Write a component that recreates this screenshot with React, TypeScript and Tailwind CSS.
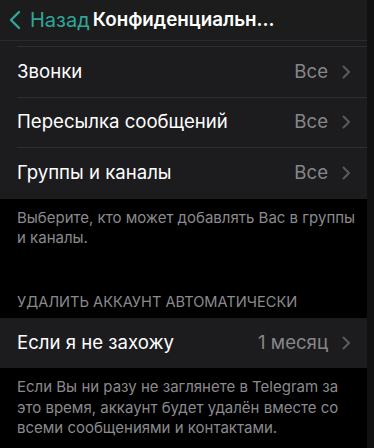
import React from "react"

const font = { fontFamily: "Inter, 'Noto Sans', sans-serif" }

function Chevron() {
  return (
    <svg width="9" height="14" viewBox="0 0 9 14" fill="none" className="ml-[14px] shrink-0">
      <path d="M1.5 1.5L7 7l-5.5 5.5" stroke="#5b5b5f" strokeWidth="2" strokeLinecap="round" strokeLinejoin="round" />
    </svg>
  )
}

function Row({ label, value, last }: { label: string; value: string; last?: boolean }) {
  return (
    <div className="pl-[17px]">
      <div className={"h-[50.5px] flex items-center pr-[16px] " + (last ? "" : "border-b border-[#2e2e30]")}>
        <span className="flex-1 text-[18.6px] text-white">{label}</span>
        <span className="text-[18.6px] text-[#86868a]">{value}</span>
        <Chevron />
      </div>
    </div>
  )
}

export default function App() {
  return (
    <div className="w-[374px] h-[448px] bg-black flex overflow-hidden" style={font}>
      <div className="flex-1 flex flex-col">
        {/* nav bar */}
        <div className="h-[41px] shrink-0 bg-[#1c1c1d] border-b border-[#2a2a2c] flex items-center pl-[8px]">
          <svg width="13" height="20" viewBox="0 0 13 20" fill="none">
            <path d="M11 2L3 10l8 8" stroke="#2fa697" strokeWidth="2.4" strokeLinecap="round" strokeLinejoin="round" />
          </svg>
          <span className="ml-[9px] text-[20px] text-[#2fa697]">Назад</span>
          <span className="ml-[3px] text-[18.8px] font-semibold text-white">Конфиденциальн...</span>
        </div>

        {/* privacy section */}
        <div className="bg-[#1c1c1e]">
          <div className="h-[6px] ml-[17px] border-b border-[#2e2e30]" />
          <Row label="Звонки" value="Все" />
          <Row label="Пересылка сообщений" value="Все" />
          <Row label="Группы и каналы" value="Все" last />
        </div>
        <p className="pl-[17px] pr-[8px] pt-[9px] text-[15px] leading-[20px] text-[#8a8a8e]">
          Выберите, кто может добавлять Вас в группы и каналы.
        </p>

        {/* auto delete */}
        <div className="mt-[44px] px-[17px] pb-[6px] text-[14.6px] leading-[20px] text-[#8a8a8e] uppercase">
          Удалить аккаунт автоматически
        </div>
        <div className="bg-[#1c1c1e]">
          <Row label="Если я не захожу" value="1 месяц" last />
        </div>
        <p className="pl-[17px] pr-[12px] pt-[9px] text-[15px] leading-[20.5px] text-[#8a8a8e]">
          Если Вы ни разу не заглянете в Telegram за это время, аккаунт будет удалён вместе со всеми сообщениями и контактами.
        </p>
      </div>
      <div className="w-[7px] shrink-0 bg-[#111112]" />
    </div>
  )
}
